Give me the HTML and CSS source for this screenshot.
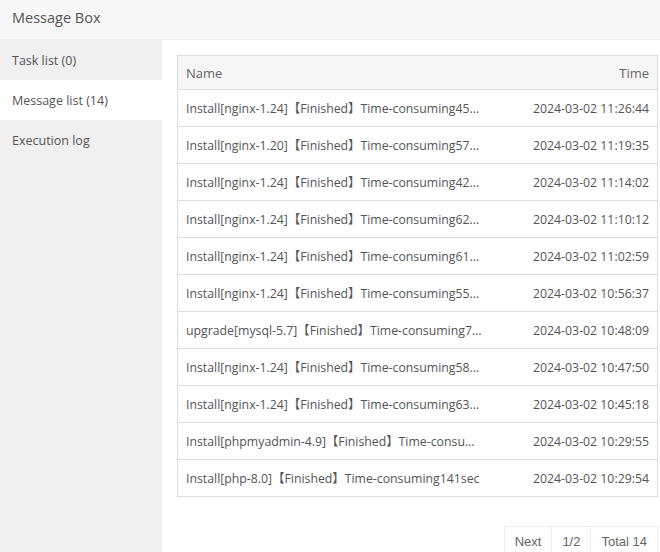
FILE: index.html
```html
<!DOCTYPE html>
<html>
<head>
	<title>Message Box</title>
	<link rel="stylesheet" href="styles.css">
</head>
<body>

	<div class="title">Message Box</div>

	<div class="main">
		<ul class="side">
			<li>Task list (0)</li>
			<li class="on">Message list (14)</li>
			<li>Execution log</li>
		</ul>

		<div class="content">
			<table class="msg">
				<thead>
					<tr><th>Name</th><th class="time">Time</th></tr>
				</thead>
				<tbody>
					<tr><td><span class="name">Install[nginx-1.24]【Finished】Time-consuming45sec</span></td><td class="time">2024-03-02 11:26:44</td></tr>
					<tr><td><span class="name">Install[nginx-1.20]【Finished】Time-consuming57sec</span></td><td class="time">2024-03-02 11:19:35</td></tr>
					<tr><td><span class="name">Install[nginx-1.24]【Finished】Time-consuming42sec</span></td><td class="time">2024-03-02 11:14:02</td></tr>
					<tr><td><span class="name">Install[nginx-1.24]【Finished】Time-consuming62sec</span></td><td class="time">2024-03-02 11:10:12</td></tr>
					<tr><td><span class="name">Install[nginx-1.24]【Finished】Time-consuming61sec</span></td><td class="time">2024-03-02 11:02:59</td></tr>
					<tr><td><span class="name">Install[nginx-1.24]【Finished】Time-consuming55sec</span></td><td class="time">2024-03-02 10:56:37</td></tr>
					<tr><td><span class="name">upgrade[mysql-5.7]【Finished】Time-consuming73sec</span></td><td class="time">2024-03-02 10:48:09</td></tr>
					<tr><td><span class="name">Install[nginx-1.24]【Finished】Time-consuming58sec</span></td><td class="time">2024-03-02 10:47:50</td></tr>
					<tr><td><span class="name">Install[nginx-1.24]【Finished】Time-consuming63sec</span></td><td class="time">2024-03-02 10:45:18</td></tr>
					<tr><td><span class="name">Install[phpmyadmin-4.9]【Finished】Time-consuming21sec</span></td><td class="time">2024-03-02 10:29:55</td></tr>
					<tr><td><span class="name">Install[php-8.0]【Finished】Time-consuming141sec</span></td><td class="time">2024-03-02 10:29:54</td></tr>
				</tbody>
			</table>

			<div class="page">
				<span>Next</span>
				<span>1/2</span>
				<span>Total 14</span>
			</div>
		</div>
	</div>

</body>
</html>
```

FILE: styles.css
```css
html, body{
	margin: 0;
	height: 100%;
	overflow: hidden;
}
body{
	font-family: "Open Sans", "Noto Sans CJK SC", sans-serif;
	font-size: 12.5px;
	color: #555;
	display: flex;
	flex-direction: column;
}
.title{
	height: 36px;
	line-height: 36px;
	padding: 0 0 3px 12px;
	font-size: 14.5px;
	color: #555;
	background-color: #f7f7f7;
	border-bottom: 1px solid #eee;
}
.main{
	flex: 1;
	display: flex;
}
.side{
	flex: 0 0 162px;
	margin: 0;
	padding: 0;
	list-style: none;
	background-color: #f0f0f0;
}
.side li{
	height: 39px;
	line-height: 40px;
	padding: 1px 0 0 12px;
}
.side .on{
	background-color: #fff;
}
.content{
	flex: 1;
	padding: 15px 0 0 15px;
}
.msg{
	width: 481px;
	border-collapse: collapse;
	border: 1px solid #ddd;
	font-size: 12.3px;
}
.msg th, .msg td{
	padding: 0 8px;
	text-align: left;
	font-weight: normal;
	white-space: nowrap;
}
.msg th{
	height: 33px;
	font-size: 13px;
	color: #666;
	background-color: #f6f6f6;
}
.msg td{
	height: 36px;
	border-top: 1px solid #ddd;
}
.msg .time{
	text-align: right;
}
.msg .name{
	display: inline-block;
	max-width: 297px;
	overflow: hidden;
	text-overflow: ellipsis;
	vertical-align: middle;
}
.page{
	display: flex;
	justify-content: flex-end;
	margin: 29px 2px 0 0;
	font-family: "Liberation Sans", Arial, sans-serif;
	font-size: 13px;
	color: #666;
}
.page span{
	height: 30px;
	line-height: 30px;
	padding: 0 10px;
	border: 1px solid #eee;
	margin-left: -1px;
}
```
